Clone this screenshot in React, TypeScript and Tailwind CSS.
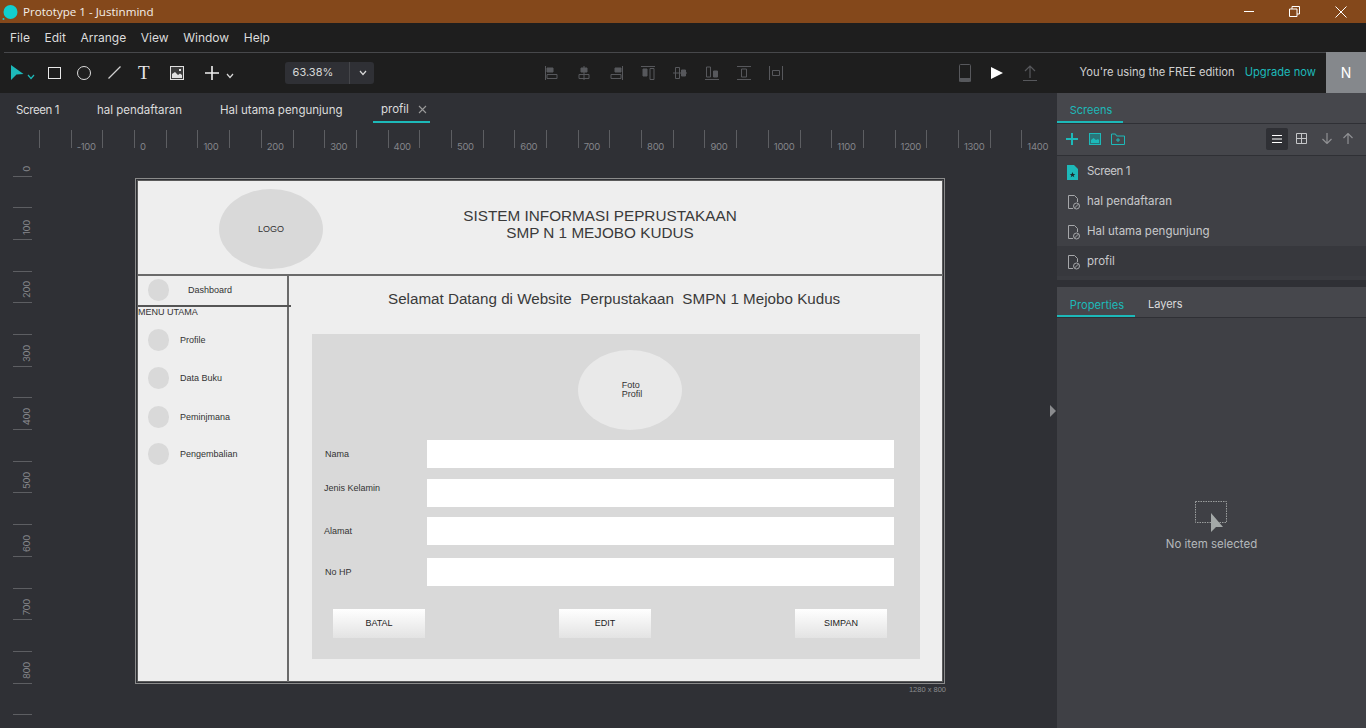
import { ReactNode } from 'react';

const menus = ['File', 'Edit', 'Arrange', 'View', 'Window', 'Help'];
const hTicks = Array.from({ length: 32 }, (_, i) => i);
const vTicks = Array.from({ length: 18 }, (_, i) => i);

function Chevron({ className = 'text-[#c8c8c8]' }: { className?: string }) {
  return (
    <svg width="8" height="6" viewBox="0 0 8 6" className={className} fill="none" stroke="currentColor" strokeWidth="1.2">
      <path d="M1 1l3 3.5L7 1" />
    </svg>
  );
}

function AlignIcon({ children }: { children: ReactNode }) {
  return (
    <svg width="16" height="16" viewBox="0 0 16 16" fill="none" stroke="#57585c" strokeWidth="1" className="shrink-0">
      {children}
    </svg>
  );
}

function PageIcon() {
  return (
    <svg width="14" height="16" viewBox="0 0 14 16" fill="none" stroke="#a5a6a9" strokeWidth="1" className="shrink-0">
      <path d="M6 14.5H1.5V1.5h6l3 3V8" />
      <circle cx="9.5" cy="12" r="3" />
      <path d="M7.5 14l4-4" />
    </svg>
  );
}

function Ellipse({ className, children }: { className: string; children?: ReactNode }) {
  return (
    <div className={`absolute rounded-[50%] bg-[#d9d9d9] flex items-center justify-center text-center text-[9px] leading-[10px] text-[#333] ${className}`}>
      {children}
    </div>
  );
}

function NavItem({ top, label, left = 'left-[45px]' }: { top: string; label: string; left?: string }) {
  return (
    <>
      <div className={`absolute left-[13px] h-[22px] w-[21px] rounded-full bg-[#d9d9d9] ${top}`} />
      <div className={`absolute text-[9px] leading-[22px] text-[#333] ${left} ${top}`}>{label}</div>
    </>
  );
}

function Field({ label, className, labelClass }: { label: string; className: string; labelClass: string }) {
  return (
    <>
      <div className={`absolute text-[9px] leading-[12px] text-[#333] ${labelClass}`}>{label}</div>
      <div className={`absolute left-[292px] h-[28px] w-[467px] bg-white ${className}`} />
    </>
  );
}

function WireButton({ label, className }: { label: string; className: string }) {
  return (
    <div className={`absolute top-[431px] flex h-[29px] w-[92px] items-center justify-center bg-gradient-to-b from-white to-[#e3e3e3] text-[9px] text-[#222] ${className}`}>
      {label}
    </div>
  );
}

function Artboard() {
  return (
    <div className="relative h-[506px] w-[810px] border border-[#8a8a8a] p-[1px] font-['Liberation_Sans',sans-serif]">
      <div className="h-full w-full border border-[#5a5a5a] bg-[#eeeeee]" />
      <div className="absolute -left-[1px] -top-[1px] h-full w-full">
        <Ellipse className="left-[84px] top-[11px] h-[80px] w-[104px]">LOGO</Ellipse>
        <div className="absolute left-[265px] top-[29px] w-[400px] text-center text-[15.3px] leading-[17px] text-[#3a3a3a]">
          SISTEM INFORMASI PEPRUSTAKAAN
          <br />
          SMP N 1 MEJOBO KUDUS
        </div>
        <div className="absolute left-[3px] right-[0px] top-[96px] h-[2px] bg-[#6a6a6a]" />
        <div className="absolute bottom-[0px] left-[151.5px] top-[97px] w-[2px] bg-[#6a6a6a]" />
        <div className="absolute left-[3px] top-[127px] h-[2px] w-[153px] bg-[#555]" />
        <NavItem top="top-[101px]" label="Dashboard" left="left-[53px]" />
        <div className="absolute left-[3px] top-[128px] text-[9px] leading-[12px] text-[#333]">MENU UTAMA</div>
        <NavItem top="top-[151px]" label="Profile" />
        <NavItem top="top-[189px]" label="Data Buku" />
        <NavItem top="top-[228px]" label="Peminjmana" />
        <NavItem top="top-[265px]" label="Pengembalian" />
        <div className="absolute left-[253px] top-[112px] whitespace-pre text-[15.2px] leading-[18px] text-[#3a3a3a]">
          Selamat Datang di Website  Perpustakaan  SMPN 1 Mejobo Kudus
        </div>
        <div className="absolute left-[177px] top-[156px] h-[325px] w-[608px] bg-[#d9d9d9]" />
        <Ellipse className="left-[443px] top-[172px] h-[80px] w-[104px] !bg-[#e9e9e9] pl-[4px]">
          <span className="text-left leading-[9px]">
            Foto
            <br />
            Profil
          </span>
        </Ellipse>
        <Field label="Nama" className="top-[262px]" labelClass="left-[190px] top-[270px]" />
        <Field label="Jenis Kelamin" className="top-[301px]" labelClass="left-[189px] top-[304px]" />
        <Field label="Alamat" className="top-[339px]" labelClass="left-[189px] top-[347px]" />
        <Field label="No HP" className="top-[380px]" labelClass="left-[190px] top-[388px]" />
        <WireButton label="BATAL" className="left-[198px]" />
        <WireButton label="EDIT" className="left-[424px]" />
        <WireButton label="SIMPAN" className="left-[660px]" />
      </div>
      <div className="absolute -bottom-[10px] -right-[2px] translate-y-[1px] text-[7.5px] leading-[9px] text-[#8b8c8f]">1280 x 800</div>
    </div>
  );
}

export default function App() {
  return (
    <div className="flex h-[728px] w-[1366px] flex-col overflow-hidden bg-[#2f3035] font-['Inter',sans-serif] text-[#d8d8d8]">
      {/* title bar */}
      <div className="flex h-[23px] shrink-0 items-center bg-[#84481b] pl-[2px] text-white">
        <svg width="18" height="18" viewBox="0 0 18 18" className="shrink-0">
          <circle cx="8.5" cy="9" r="7" fill="#12cfcf" />
          <circle cx="1.5" cy="16" r="1" fill="#12cfcf" />
        </svg>
        <span className="ml-[3px] font-['Open_Sans',sans-serif] text-[11.6px] text-[#f4efe9]">Prototype 1 - Justinmind</span>
        <div className="ml-auto mr-[19px] flex items-center">
          <div className="h-[1px] w-[10px] bg-white" />
          <svg width="11" height="11" viewBox="0 0 11 11" fill="none" stroke="white" className="ml-[35px]">
            <path d="M.5 3h7.5v7.5H.5zM3 3V.5h7.5V8H8" />
          </svg>
          <svg width="12" height="12" viewBox="0 0 12 12" fill="none" stroke="white" className="ml-[35px]">
            <path d="M.5.5l11 11M11.5.5l-11 11" />
          </svg>
        </div>
      </div>

      {/* menu bar */}
      <div className="flex h-[29px] shrink-0 items-center gap-[14.6px] bg-[#1e1e1e] pl-[10px] pt-[1px] text-[12px] text-[#dcdcdc]">
        {menus.map((m) => (
          <span key={m}>{m}</span>
        ))}
      </div>

      {/* toolbar */}
      <div className="flex h-[41px] shrink-0 items-center bg-[#1e1e1e] shadow-[inset_4px_0_0_#1e1e1e,inset_0_1px_0_#47484b]">
        <svg width="13" height="15" viewBox="0 0 13 15" className="ml-[11px] shrink-0">
          <path d="M0 0l12.5 9L5.5 9.500 0 15z" fill="#1db9b9" />
        </svg>
        <Chevron className="ml-[3px] mt-[8px] text-[#1db9b9]" />
        <div className="ml-[13px] h-[12px] w-[13px] border-[1.5px] border-[#e8e8e8]" />
        <div className="ml-[16px] h-[14px] w-[14px] rounded-full border-[1.5px] border-[#dcdcdc]" />
        <svg width="13" height="13" viewBox="0 0 13 13" className="ml-[17px]" stroke="#d0d0d0" strokeWidth="1.2">
          <path d="M.5 12.5l12-12" />
        </svg>
        <span className="ml-[17px] font-['Liberation_Serif',serif] text-[19px] leading-none text-[#e8e8e8]">T</span>
        <svg width="14" height="14" viewBox="0 0 14 14" className="ml-[20px]">
          <rect x=".5" y=".5" width="13" height="13" fill="#3c3c3c" stroke="#e0e0e0" />
          <path d="M2 12V8l3-2 3 3 2-1.5L12 9v3z" fill="#e0e0e0" />
          <rect x="9" y="3" width="2" height="2" fill="#e0e0e0" />
        </svg>
        <svg width="14" height="14" viewBox="0 0 14 14" className="ml-[21px]" stroke="#f0f0f0" strokeWidth="1.6">
          <path d="M7 0v14M0 7h14" />
        </svg>
        <Chevron className="ml-[7px] mt-[6px]" />
        <div className="ml-[51px] flex h-[22px] w-[89px] items-center rounded-[3px] bg-[#2f3035] text-[11px] text-[#d8d8d8]">
          <span className="w-[64px] pl-[8px]">63.38%</span>
          <div className="h-full w-[1px] bg-[#45464a]" />
          <Chevron className="ml-[9px]" />
        </div>

        <div className="ml-[170px] flex items-center gap-[16px]">
          <AlignIcon>
            <path d="M1.5 1v14M3 9.5h10v4H3z" />
            <path d="M3 3h6v4H3z" fill="#57585c" />
          </AlignIcon>
          <AlignIcon>
            <path d="M8 1v14M3 9.5h10v4H3z" />
            <path d="M5 3h6v4H5z" fill="#57585c" />
          </AlignIcon>
          <AlignIcon>
            <path d="M14.5 1v14M3 9.5h10v4H3z" />
            <path d="M7 3h6v4H7z" fill="#57585c" />
          </AlignIcon>
          <AlignIcon>
            <path d="M1 1.5h14M10 3.5h4v11h-4z" />
            <path d="M3 4h4v7H3z" fill="#57585c" />
          </AlignIcon>
          <AlignIcon>
            <path d="M1 8h14M3.5 2.5h4v11h-4z" />
            <path d="M9.5 5h4v6h-4z" fill="#57585c" />
          </AlignIcon>
          <AlignIcon>
            <path d="M1 14.5h14M2.5 2h4v10h-4z" />
            <path d="M9.5 6h4v6h-4z" fill="#57585c" />
          </AlignIcon>
          <AlignIcon>
            <path d="M1 1.5h14M1 14.5h14M5.5 4h5v8h-5z" />
          </AlignIcon>
          <AlignIcon>
            <path d="M1.5 1v14M14.5 1v14M4.5 5.5h7v5h-7z" />
          </AlignIcon>
        </div>

        <svg width="12" height="18" viewBox="0 0 12 18" className="ml-[175px]" fill="none" stroke="#57585c">
          <rect x=".5" y=".5" width="11" height="17" rx="1" />
          <path d="M0 14.5h12V17H0z" fill="#57585c" />
        </svg>
        <svg width="12" height="12" viewBox="0 0 12 12" className="ml-[20px]">
          <path d="M0 0l12 6-12 6z" fill="white" />
        </svg>
        <svg width="14" height="16" viewBox="0 0 14 16" className="ml-[20px]" fill="none" stroke="#57585c" strokeWidth="1.2">
          <path d="M7 13V1M2 6l5-5 5 5M0 15.5h14" />
        </svg>
        <span className="ml-[43px] whitespace-nowrap text-[11.2px] text-[#d0d0d0]">You're using the FREE edition</span>
        <span className="ml-[10px] whitespace-nowrap text-[11.2px] text-[#1db9b9]">Upgrade now</span>
        <div className="ml-auto flex h-full w-[40px] items-center justify-center bg-[#85888c] text-[14px] text-white">N</div>
      </div>

      <div className="flex min-h-0 flex-1">
        {/* editor */}
        <div className="relative flex w-[1057px] shrink-0 flex-col">
          <div className="flex h-[30px] shrink-0 items-center text-[11.5px] text-[#dcdcdc]">
            <span className="ml-[16px] mt-[5px] w-[81px] tracking-[-0.4px]">Screen 1</span>
            <span className="mt-[5px] w-[123px]">hal pendaftaran</span>
            <span className="mt-[5px] w-[153px]">Hal utama pengunjung</span>
            <div className="relative flex h-full w-[57px] items-center border-b-2 border-[#1db9b9] pl-[8px] pt-[5px]">
              <span>profil</span>
              <svg width="9" height="9" viewBox="0 0 9 9" className="ml-[9px]" stroke="#9a9a9a" strokeWidth="1.1">
                <path d="M1 1l7 7M8 1L1 8" />
              </svg>
            </div>
          </div>

          {/* rulers */}
          <div className="flex h-[29px] shrink-0 items-start overflow-hidden pl-[39px] pt-[7px]">
            {hTicks.map((i) => (
              <div key={i} className="h-[18px] w-[31.69px] shrink-0 whitespace-nowrap border-l border-[#5d5e62] pl-[5px] pt-[11px] text-[9.5px] leading-[12px] tracking-[-0.3px] text-[#84858a]">
                {i % 2 === 1 ? (i - 3) * 50 : ''}
              </div>
            ))}
          </div>

          <div className="flex min-h-0 flex-1">
            <div className="w-[32px] shrink-0 pl-[13px]">
              {vTicks.map((i) => (
                <div key={i} className={`relative w-[19px] shrink-0 border-b border-[#5d5e62] ${i === 0 ? 'h-[24.6px]' : 'h-[31.69px]'}`}>
                  {i % 2 === 0 && (
                    <span className="absolute bottom-[4px] right-[-1px] text-[9.5px] leading-[12px] tracking-[-0.3px] text-[#84858a] [writing-mode:vertical-rl] rotate-180">
                      {i * 50}
                    </span>
                  )}
                </div>
              ))}
            </div>
            <div className="pl-[103px] pt-[26px]">
              <Artboard />
            </div>
          </div>

          <svg width="6" height="12" viewBox="0 0 6 12" className="absolute left-[1050px] top-[312px]">
            <path d="M0 0l6 6-6 6z" fill="#8a8b8e" />
          </svg>
        </div>

        {/* right panel */}
        <div className="flex flex-1 flex-col bg-[#3f4045] text-[11.5px]">
          <div className="flex h-[31px] shrink-0 border-b border-[#2f3035] bg-[#46474c]">
            <div className="flex w-[66px] items-center justify-center border-b-2 border-[#1db9b9] pl-[2px] pt-[6px] text-[11px] text-[#1db9b9]">Screens</div>
          </div>
          <div className="flex h-[32px] shrink-0 items-center border-b border-[#2f3035] bg-[#45464b] pb-[2px] pl-[9px]">
            <svg width="12" height="12" viewBox="0 0 12 12" stroke="#1db9b9" strokeWidth="2">
              <path d="M6 0v12M0 6h12" />
            </svg>
            <svg width="12" height="12" viewBox="0 0 12 12" className="ml-[11px]">
              <rect x=".5" y=".5" width="11" height="11" fill="#2a7579" stroke="#1db9b9" />
              <path d="M2 10V7l2.5-2 2.5 2 2-1 1 1v3z" fill="#1db9b9" />
            </svg>
            <svg width="14" height="12" viewBox="0 0 14 12" className="ml-[10px]" fill="none" stroke="#1db9b9">
              <path d="M.5 1h4l1 2h8v8.5H.5zM7 5v4M5 7h4" />
            </svg>
            <div className="ml-auto mr-[2px] flex items-center">
              <div className="flex h-[22px] w-[22px] items-center justify-center rounded-[2px] bg-[#2f3035]">
                <svg width="10" height="8" viewBox="0 0 10 8" stroke="white">
                  <path d="M0 .5h10M0 4h10M0 7.5h10" />
                </svg>
              </div>
              <svg width="11" height="11" viewBox="0 0 11 11" className="ml-[8px]" fill="none" stroke="#c5c6c8">
                <path d="M.5.5h10v10H.5zM5.5.5v10M.5 5.5h10" />
              </svg>
              <svg width="10" height="11" viewBox="0 0 10 11" className="ml-[15px]" fill="none" stroke="#8f9093" strokeWidth="1.2">
                <path d="M5 0v10M.5 6L5 10.5 9.5 6" />
              </svg>
              <svg width="10" height="11" viewBox="0 0 10 11" className="ml-[11px] mr-[11px]" fill="none" stroke="#8f9093" strokeWidth="1.2">
                <path d="M5 11V1M.5 5L5 .5 9.5 5" />
              </svg>
            </div>
          </div>
          <div className="flex h-[30px] shrink-0 items-center pl-[10px] pt-[2px] text-[#c8c9cb]">
            <svg width="11" height="15" viewBox="0 0 11 15" className="shrink-0">
              <path d="M0 0h7l4 4v11H0z" fill="#1db9b9" />
              <path d="M5.5 7l.8 2h2l-1.6 1.3.6 2-1.8-1.2-1.8 1.2.6-2L2.7 9h2z" fill="#1e2a2c" />
            </svg>
            <span className="ml-[9px] tracking-[-0.4px]">Screen 1</span>
          </div>
          {['hal pendaftaran', 'Hal utama pengunjung', 'profil'].map((s) => (
            <div key={s} className={`flex h-[30px] shrink-0 items-center pl-[10px] pt-[2px] text-[#c8c9cb] ${s === 'profil' ? 'bg-[#37383d]' : ''}`}>
              <PageIcon />
              <span className="ml-[6px]">{s}</span>
            </div>
          ))}
          <div className="h-[4px] shrink-0 bg-[#3a3b40]" />
          <div className="h-[7px] shrink-0 bg-[#2f3035]" />
          <div className="flex h-[31px] shrink-0 border-b border-[#2f3035] bg-[#46474c]">
            <div className="flex w-[78px] items-center justify-center border-b-2 border-[#1db9b9] pl-[2px] pt-[8px] text-[11.2px] text-[#1db9b9]">Properties</div>
            <div className="ml-[13px] flex items-center pt-[4px] text-[11px] text-[#dcdcdc]">Layers</div>
          </div>
          <div className="flex flex-1 flex-col items-center pt-[183px]">
            <svg width="34" height="32" viewBox="0 0 34 32" className="shrink-0">
              <rect x=".5" y=".5" width="31" height="21" fill="none" stroke="#9a9d9d" strokeDasharray="1.5 1" />
              <path d="M16 12l12 14-7 0-5 5z" fill="#a4a9a8" />
            </svg>
            <span className="mt-[3px] text-[#b4b8bb]">No item selected</span>
          </div>
        </div>
      </div>
    </div>
  );
}
